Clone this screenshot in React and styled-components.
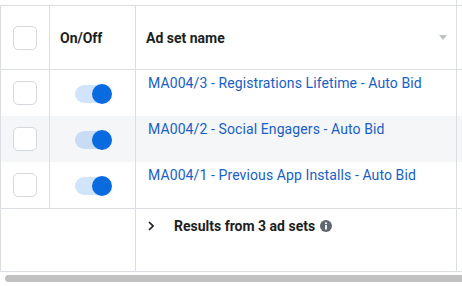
import React from "react";
import styled, { createGlobalStyle } from "styled-components";

const Global = createGlobalStyle`
  html, body { margin: 0; padding: 0; background: #fff; }
  body { font-family: Roboto, "Liberation Sans", Arial, sans-serif; }
  * { box-sizing: border-box; }
`;

const LINE = "#dadde1";

const Page = styled.div`
  width: 462px;
  height: 286px;
  overflow: hidden;
  display: flex;
  flex-direction: column;
`;

const Grid = styled.div`
  display: grid;
  grid-template-columns: 50px 86px 321px 1fr;
`;

const Cell = styled.div`
  border-right: ${(p) => (p.$noRight ? "none" : `1px solid ${LINE}`)};
  border-left: ${(p) => (p.$first ? `1px solid ${LINE}` : "none")};
  border-bottom: ${(p) => (p.$bottom ? `1px solid ${LINE}` : "none")};
  border-top: ${(p) => (p.$top ? `1px solid ${LINE}` : "none")};
  background: ${(p) => (p.$shade ? "#f5f6f7" : "#fff")};
  height: ${(p) => p.$h}px;
  grid-column: ${(p) => p.$span || "auto"};
`;

const CenterCell = styled(Cell)`
  display: flex;
  align-items: center;
  justify-content: center;
`;

const HeadCell = styled(Cell)`
  display: flex;
  align-items: center;
  padding: 0 9px 0 10px;
  font-size: 14px;
  font-weight: 700;
  color: #1c1e21;
  justify-content: space-between;
`;

const NameCell = styled(Cell)`
  padding: 3px 12px 0 12px;
`;

const Link = styled.a`
  font-size: 14px;
  line-height: 16px;
  letter-spacing: 0.1px;
  color: #1760c8;
  text-decoration: none;
  white-space: nowrap;
`;

const Checkbox = styled.div`
  width: 24px;
  height: 24px;
  border: 1px solid #d5d8dc;
  border-radius: 5px;
  background: #fff;
`;

const Toggle = styled.div`
  position: relative;
  width: 36px;
  height: 18px;
  border-radius: 9px;
  background: rgba(24, 119, 242, 0.2);
  margin-left: 1px;
  margin-top: 1px;
`;

const Knob = styled.div`
  position: absolute;
  right: -1px;
  top: -1px;
  width: 20px;
  height: 20px;
  border-radius: 50%;
  background: #0a6ae0;
`;

const Caret = styled.svg`
  width: 8px;
  height: 5px;
  flex: none;
`;

const FooterCell = styled(Cell)`
  display: flex;
  align-items: flex-start;
  padding: 9px 0 0 12px;
`;

const Chevron = styled.svg`
  width: 6px;
  height: 10px;
  margin-top: 3px;
  margin-right: 20px;
`;

const Results = styled.span`
  font-size: 14px;
  line-height: 16px;
  font-weight: 700;
  color: #1c1e21;
  display: flex;
  align-items: center;
  gap: 5px;
`;

const Info = styled.svg`
  width: 12px;
  height: 12px;
`;

const ScrollTrack = styled.div`
  padding: 3px 0 0 5px;
`;

const ScrollThumb = styled.div`
  height: 7px;
  border-radius: 4px 0 0 4px;
  background: #c1c1c1;
`;

const rows = [
  "MA004/3 - Registrations Lifetime - Auto Bid",
  "MA004/2 - Social Engagers - Auto Bid",
  "MA004/1 - Previous App Installs - Auto Bid",
];

export default function App() {
  return (
    <>
      <Global />
      <Page>
        <Grid>
          <Cell $h={5} $noRight />
          <Cell $h={5} $noRight />
          <Cell $h={5} />
          <Cell $h={5} $noRight />

          <CenterCell $first $top $bottom $h={65}>
            <Checkbox />
          </CenterCell>
          <HeadCell $top $bottom $h={65}>On/Off</HeadCell>
          <HeadCell $top $bottom $h={65}>
            <span>Ad set name</span>
            <Caret viewBox="0 0 8 5">
              <path d="M0 0h8L4 5z" fill="#bec3c9" />
            </Caret>
          </HeadCell>
          <Cell $top $bottom $noRight $h={65} />

          {rows.map((name, i) => {
            const last = i === rows.length - 1;
            const shade = i === 1;
            const h = last ? 47 : 46;
            return (
              <React.Fragment key={name}>
                <CenterCell $first $bottom={last} $shade={shade} $h={h}>
                  <Checkbox />
                </CenterCell>
                <CenterCell $bottom={last} $shade={shade} $h={h}>
                  <Toggle>
                    <Knob />
                  </Toggle>
                </CenterCell>
                <NameCell $bottom={last} $shade={shade} $h={h}>
                  <Link href="#">{name}</Link>
                </NameCell>
                <Cell $noRight $bottom={last} $shade={shade} $h={h} />
              </React.Fragment>
            );
          })}

          <Cell $first $bottom $span="span 2" $h={63} />
          <FooterCell $bottom $h={63}>
            <Chevron viewBox="0 0 6 10">
              <path d="M1 1l4 4-4 4" fill="none" stroke="#1c1e21" strokeWidth="1.6" />
            </Chevron>
            <Results>
              Results from 3 ad sets
              <Info viewBox="0 0 12 12">
                <circle cx="6" cy="6" r="6" fill="#606770" />
                <rect x="5.1" y="5" width="1.8" height="4.5" fill="#fff" />
                <circle cx="6" cy="3.2" r="1.05" fill="#fff" />
              </Info>
            </Results>
          </FooterCell>
          <Cell $noRight $bottom $h={63} />
        </Grid>
        <ScrollTrack>
          <ScrollThumb />
        </ScrollTrack>
      </Page>
    </>
  );
}
